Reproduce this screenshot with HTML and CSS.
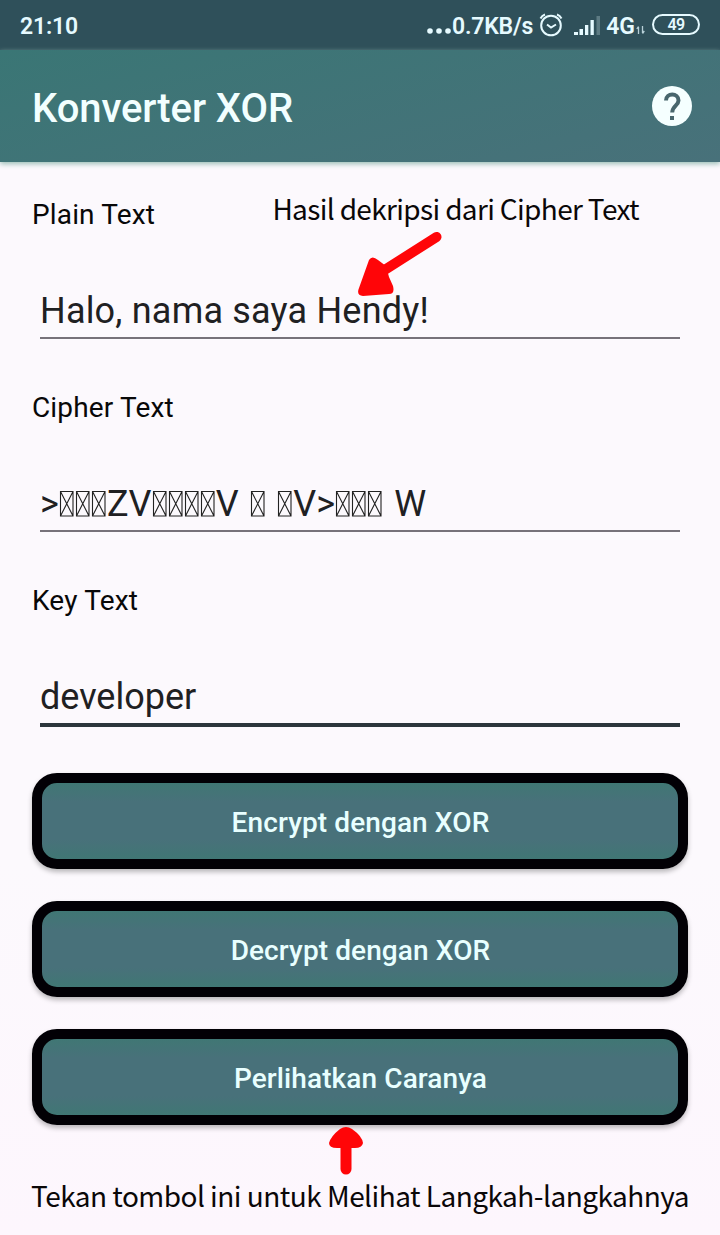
FILE: index.html
```html
<!DOCTYPE html>
<html lang="id">
<head>
<meta charset="utf-8">
<title>Konverter XOR</title>
<link rel="stylesheet" href="styles.css">
</head>
<body>
<svg class="defs" aria-hidden="true"><symbol id="tofu" viewBox="0 0 16 27"><path d="M1.5 1.500h12.500v24.500h-12.500zM1.500 1.500l12.500 24.500M14 1.500l-12.500 24.500" fill="none" stroke="#222" stroke-width="1.100"/></symbol></svg>
<div class="status">
  <span class="clock">21:10</span>
  <div class="indicators">
    <svg class="dots" viewBox="0 0 26 26"><circle cx="4" cy="18" r="2.8"/><circle cx="13" cy="18" r="2.8"/><circle cx="22" cy="18" r="2.8"/></svg>
    <span class="speed">0.7KB/s</span>
    <svg class="alarm" viewBox="0 0 26 26"><circle cx="13" cy="13.5" r="9.8"/><path d="M2.5 6.5Q4 3.5 7 2.5M23.500 6.5Q22 3.500 19 2.500M9 12.500l4 3 5-3"/></svg>
    <svg class="signal" viewBox="0 0 28 26"><path d="M1 19h4v3H1zM6.500 16H10v6H6.500zM12 12h3.300v10H12zM17.500 7h3.300v15h-3.300z"/><path class="faint" d="M23.500 3H27v19h-3.500z"/></svg>
    <span class="network">4G</span>
    <svg class="arrows" viewBox="0 0 9 10"><path d="M2.500 9V2M.8 4l1.700-2.500M6.500 1v7M8.300 6L6.500 8.500"/></svg>
    <span class="battery">49</span>
  </div>
</div>
<header class="appbar">
  <h1 class="title">Konverter XOR</h1>
  <svg class="help" viewBox="0 0 40 40"><circle cx="20" cy="20" r="20" fill="#f5ffff"/><path d="M14 14.500C14 6.500 26.500 6.500 26.500 14.500C26.500 19.500 20.200 20 20.200 26.500" fill="none" stroke="#48666d" stroke-width="4"/><path d="M18 30h4v4h-4z" fill="#48666d"/></svg>
</header>
<main class="content">
  <section class="field">
    <div class="label-row"><label class="label">Plain Text</label><span class="note note-top">Hasil dekripsi dari Cipher Text</span></div>
    <div class="input plain">Halo, nama saya Hendy!</div>
    <svg class="arrow-down" viewBox="0 0 88 70"><path d="M78.500 6L25 40" stroke="#ff0508" stroke-width="10" stroke-linecap="round"/><path d="M11 29Q14 24 20 29L28 35 31 46 35 55Q37 63 31 63L5 65Q-2 64 1 57Z" fill="#ff0508"/></svg>
  </section>
  <section class="field">
    <div class="label-row"><label class="label">Cipher Text</label></div>
    <div class="input cipher">&gt;<svg class="tofu"><use href="#tofu"/></svg><svg class="tofu"><use href="#tofu"/></svg><svg class="tofu"><use href="#tofu"/></svg>ZV<svg class="tofu"><use href="#tofu"/></svg><svg class="tofu"><use href="#tofu"/></svg><svg class="tofu"><use href="#tofu"/></svg><svg class="tofu"><use href="#tofu"/></svg>V <svg class="tofu"><use href="#tofu"/></svg> <svg class="tofu"><use href="#tofu"/></svg>V&gt;<svg class="tofu"><use href="#tofu"/></svg><svg class="tofu"><use href="#tofu"/></svg><svg class="tofu"><use href="#tofu"/></svg> W</div>
  </section>
  <section class="field">
    <div class="label-row"><label class="label">Key Text</label></div>
    <div class="input focused">developer</div>
  </section>
  <div class="actions">
    <button class="action">Encrypt dengan XOR</button>
    <button class="action">Decrypt dengan XOR</button>
    <button class="action">Perlihatkan Caranya</button>
    <svg class="arrow-up" viewBox="0 0 36 50"><path d="M18 14V43" stroke="#ff0508" stroke-width="11" stroke-linecap="round"/><path d="M12 3Q18-1 24 3Q34 10 35 17Q34 22 27 22H9Q1 22 1 17Q3 10 12 3Z" fill="#ff0508"/></svg>
  </div>
  <p class="note note-bottom">Tekan tombol ini untuk Melihat Langkah-langkahnya</p>
</main>
</body>
</html>
```
FILE: styles.css
```css
* { box-sizing: border-box; }
body {
  margin: 0;
  width: 720px;
  height: 1235px;
  overflow: hidden;
  background: linear-gradient(#fcf9fd 70%, #fdf6fd);
  font-family: Roboto, sans-serif;
  color: #080808;
}
.defs { display: none; }
.status {
  height: 50px;
  padding: 2px 20px 0;
  background: #2f505a;
  color: #e6faff;
  display: flex;
  align-items: center;
  justify-content: space-between;
  font-size: 24px;
  font-weight: 600;
}
.clock { font-size: 23px; letter-spacing: -0.2px; }
.indicators { display: flex; align-items: center; }
.speed { font-size: 23px; letter-spacing: -0.2px; }
.dots { width: 26px; height: 26px; fill: #e6faff; }
.alarm {
  width: 26px;
  height: 26px;
  margin: -3px 9px 0 5px;
  fill: none;
  stroke: #e6faff;
  stroke-width: 2;
}
.signal { width: 28px; height: 26px; fill: #e6faff; margin-right: 5px; }
.faint { opacity: .25; }
.network { font-size: 23px; }
.arrows { width: 9px; height: 10px; margin: 7px 7px 0 1px; fill: none; stroke: #b8d0d8; stroke-width: 1.3; }
.battery {
  width: 48px;
  height: 21px;
  margin-top: -4px;
  border: 2px solid #e6faff;
  border-radius: 11px;
  font-size: 16px;
  line-height: 18px;
  letter-spacing: -0.6px;
  text-align: center;
}
.appbar {
  position: relative;
  height: 112px;
  padding: 0 28px 0 32px;
  background: linear-gradient(165deg, #3a7675, #48717a);
  box-shadow: 0 2px 5px #9abeb6;
  display: flex;
  align-items: center;
  justify-content: space-between;
}
.title {
  margin: 4px 0 0;
  color: #f2ffff;
  font-size: 40px;
  font-weight: 500;
  letter-spacing: -0.08px;
}
.help { width: 40px; height: 40px; }
.content { padding: 32px 32px 0; }
.field { position: relative; height: 193px; }
.label-row { height: 40px; display: flex; justify-content: space-between; }
.label { font-size: 28px; line-height: 42px; letter-spacing: 0.15px; }
.note {
  font-family: "Noto Sans CJK SC", sans-serif;
  color: #0a0708;
  white-space: nowrap;
}
.note-top { font-size: 28px; line-height: 28px; margin-right: 49px; letter-spacing: -0.65px; }
.input {
  height: 105px;
  margin: 0 8px;
  padding-top: 53px;
  border-bottom: 2px solid #77727a;
  font-size: 36px;
  line-height: 48px;
  color: #202022;
  white-space: nowrap;
}
.plain { letter-spacing: 0.2px; }
.cipher { word-spacing: 2.2px; letter-spacing: 0.1px; }
.tofu { width: 16px; height: 27px; vertical-align: -1px; }
.focused { height: 107px; border-bottom: 4px solid #2c363c; }
.actions {
  position: relative;
  display: grid;
  gap: 32px;
}
.action {
  height: 96px;
  border: 10px solid #020005;
  border-radius: 25px;
  background: linear-gradient(#407774, #48717a 25%, #48717a 75%, #407774);
  box-shadow: 0 3px 5px #0004;
  color: #e8ffff;
  font: 500 28px Roboto, sans-serif;
  letter-spacing: 0.1px;
  padding: 2px 0 0 1px;
}
.arrow-down { position: absolute; left: 326px; top: 37px; width: 88px; height: 70px; }
.arrow-up { position: absolute; left: 296px; top: 353px; width: 36px; height: 50px; }
.note-bottom { margin: 50px 0 0 -1px; font-size: 28px; line-height: 40px; letter-spacing: -0.53px; }
```
